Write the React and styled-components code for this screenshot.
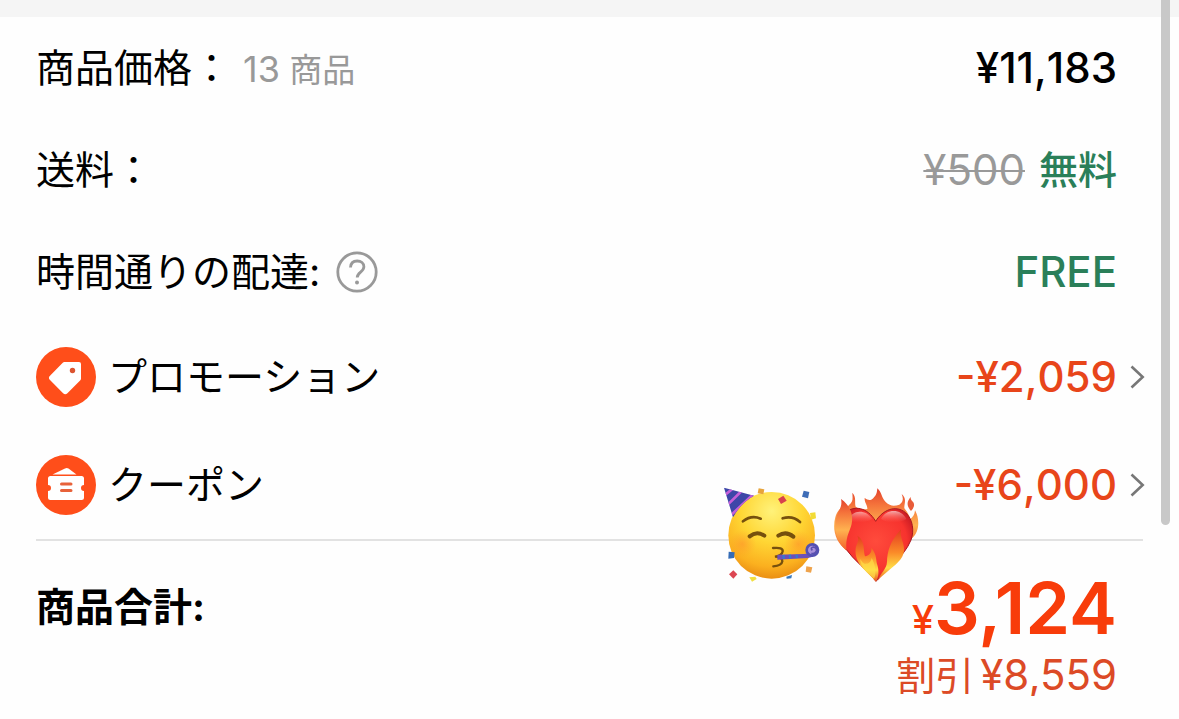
import React from 'react';
import styled, { createGlobalStyle } from 'styled-components';

const GlobalStyle = createGlobalStyle`
  * {
    box-sizing: border-box;
  }

  body {
    margin: 0;
    background: #fefefe;
    color: #000;
    font-family: Inter, "Noto Sans CJK JP", sans-serif;
    overflow: hidden;
  }
`;

const Page = styled.main`
  position: relative;
`;

const TopGap = styled.div`
  height: 17px;
  background: #f5f5f5;
`;

const ScrollThumb = styled.div`
  position: absolute;
  top: 0;
  right: 9px;
  width: 9px;
  height: 525px;
  border-radius: 0 0 5px 5px;
  background: #c8c8c8;
`;

const Row = styled.div`
  width: 100%;
  min-height: ${({ $tall }) => ($tall ? 108 : 102)}px;
  padding: 0 34px 0 36px;
  display: flex;
  align-items: center;
  justify-content: space-between;
  border: 0;
  background: none;
  color: inherit;
  font-family: inherit;
  text-align: left;
`;

const Label = styled.span`
  display: flex;
  align-items: center;
  gap: 12px;
  font-size: 39px;
  line-height: 56px;
`;

const Title = styled.span`
  font-weight: ${({ $bold }) => ($bold ? 700 : 400)};
`;

const Count = styled.span`
  padding-top: 2px;
  color: #999;
  font-size: 33px;
`;

const CountNumber = styled.span`
  font-size: 36px;
`;

const Value = styled.span`
  display: flex;
  align-items: center;
  gap: 14px;
  margin-left: auto;
  color: ${({ $color }) => $color || '#000'};
  font-size: 42px;
  font-weight: 500;
  font-kerning: none;
  line-height: 56px;
`;

const OldPrice = styled.s`
  color: #999;
  font-weight: 400;
  text-decoration-thickness: 2px;
`;

const Free = styled.span`
  font-size: 39px;
`;

const Trailing = styled.span`
  flex: none;
  width: 28px;
  display: flex;
  justify-content: flex-end;
`;

const HelpButton = styled.button`
  display: flex;
  padding: 0 0 0 4px;
  border: 0;
  background: none;
`;

const Divider = styled.div`
  position: relative;
  height: 2px;
  margin: 0 36px;
  background: #e2e2e2;
`;

const Stickers = styled.div`
  position: absolute;
  top: -64px;
  right: 208px;
  display: flex;
`;

const TotalRow = styled.div`
  padding: 32px 62px 0 36px;
  display: flex;
  justify-content: space-between;
  align-items: flex-start;
`;

const TotalAmounts = styled.div`
  text-align: right;
`;

const TotalLabel = styled(Label)`
  padding-top: 6px;
`;

const TotalPrice = styled.div`
  color: #f83c0a;
  font-size: 72px;
  font-weight: 600;
  line-height: 70px;
`;

const Currency = styled.span`
  font-size: 40px;
  font-weight: 500;
`;

const Saved = styled.div`
  color: #dc4a26;
  font-size: 42px;
  line-height: 40px;
`;

const SavedLabel = styled.span`
  padding-right: 6px;
  font-size: 39px;
`;

const HelpIcon = () => (
  <svg width="42" height="42" viewBox="0 0 42 42" fill="none" stroke="#999" strokeWidth="2.8">
    <circle cx="21" cy="21" r="19.2" />
    <path d="M14.500 16.500c.2-4.200 2.900-6.500 6.700-6.500 3.900 0 6.700 2.300 6.700 5.800 0 5.200-6.700 5.400-6.700 10.700" />
    <circle cx="21" cy="31.5" r="2" fill="#999" stroke="none" />
  </svg>
);

const TagIcon = () => (
  <svg width="60" height="60" viewBox="0 0 60 60">
    <circle cx="30" cy="30" r="30" fill="#ff4e1a" />
    <path
      d="M28.500 15H43a2 2 0 0 1 2 2v14.500a3 3 0 0 1-.9 2.100L31.400 46.200a3 3 0 0 1-4.300 0L14 33a3 3 0 0 1 0-4.300l12.500-12.800a3 3 0 0 1 2-.9z"
      fill="#fff"
    />
    <circle cx="36.5" cy="23.5" r="2.7" fill="#dc5430" />
  </svg>
);

const CouponIcon = () => (
  <svg width="60" height="60" viewBox="0 0 60 60">
    <circle cx="30" cy="30" r="30" fill="#ff4e1a" />
    <path d="M16.500 19.500 29 13.400a4 4 0 0 1 3.500.1l8 6z" fill="#fff" />
    <path
      d="M14.500 21h31a2.500 2.500 0 0 1 2.500 2.500V30a3 3 0 0 0 0 6v6.500a2.500 2.500 0 0 1-2.500 2.500h-31a2.500 2.500 0 0 1-2.500-2.500V36a3 3 0 0 0 0-6v-6.500a2.500 2.500 0 0 1 2.500-2.500z"
      fill="#fff"
    />
    <path d="M25.500 29h9.500M25.500 35.500h9.500" stroke="#e8623a" strokeWidth="3" strokeLinecap="round" />
  </svg>
);

const Chevron = () => (
  <svg width="15" height="24" viewBox="0 0 15 24" fill="none" stroke="#777" strokeWidth="2.6">
    <path d="m1.500 1.500 11.200 10.500L1.500 22.500" />
  </svg>
);

const PartyFace = () => (
  <svg width="115" height="120" viewBox="0 0 345 360">
    <defs>
      <radialGradient id="face" cx="0.5" cy="0.22" r="0.8">
        <stop offset="0" stopColor="#fff27a" />
        <stop offset="0.45" stopColor="#ffd634" />
        <stop offset="0.8" stopColor="#fbb01f" />
        <stop offset="1" stopColor="#e88a12" />
      </radialGradient>
      <radialGradient id="cheek">
        <stop offset="0" stopColor="#ff8a2c" stopOpacity="0.5" />
        <stop offset="1" stopColor="#ff9c28" stopOpacity="0" />
      </radialGradient>
      <clipPath id="hat">
        <path d="M42 38 132 62Q94 82 69 127Z" />
      </clipPath>
    </defs>
    <circle cx="185" cy="181" r="130" fill="url(#face)" />
    <circle cx="97" cy="207" r="42" fill="url(#cheek)" />
    <circle cx="265" cy="207" r="42" fill="url(#cheek)" />
    <g clipPath="url(#hat)">
      <path d="M35 30h105v105H35z" fill="#3d46a8" />
      <path d="M42 62 72 38M48 94 101 42M57 126 134 54" stroke="#c65fd8" strokeWidth="8" />
    </g>
    <g fill="none" stroke="#76500d" strokeLinecap="round">
      <path d="M99 139q25-20 53-8M218 130q30-9 52 11" strokeWidth="8" />
      <path d="M119 184q21-17 44-2M205 182q23-15 45 3" strokeWidth="12" />
      <path d="M189 219q31-3 29 10-2 12-23 16 23 1 22 14-2 13-27 15" strokeWidth="7" />
    </g>
    <path d="m202 239 79-2q24 0 34-12l7 8q-12 17-42 17l-78 4z" fill="#6c50b8" />
    <path d="m220 240 2 11m17-12 2 11m18-11 2 10" stroke="#3478d2" strokeWidth="7" />
    <circle cx="307" cy="225" r="17" fill="#a991db" stroke="#5350b2" strokeWidth="8" />
    <path d="M307 226q-7-8 3-10 11 2 9 12-4 10-15 7" fill="none" stroke="#5950af" strokeWidth="5" />
    <path d="m146 40 17 3-3 15-17-3z" fill="#e7a43b" />
    <path d="m204 72 16-10 10 15-17 10z" fill="#d8414d" />
    <path d="m281 47 17 4-4 19-18-5z" fill="#3e6db7" />
    <path d="m300 114 16-2 2 18-15 4z" fill="#f2db35" />
    <path d="m56 230 18 2-2 17-17 2z" fill="#356cb6" />
    <path d="m70 286 12 12-12 13-13-13z" fill="#dc4652" />
    <path d="m118 307 18-2 4 7-14 8z" fill="#f2df3f" />
    <path d="m229 305 17-5-2 10-14 1z" fill="#3878bc" />
    <path d="m289 274 18 3-4 16-16-3z" fill="#eea34c" />
  </svg>
);

const FireHeart = () => (
  <svg width="110" height="120" viewBox="0 0 330 360">
    <defs>
      <linearGradient id="flame" x1="0" y1="0" x2="0" y2="1">
        <stop offset="0" stopColor="#e2412c" />
        <stop offset="0.25" stopColor="#f4703a" />
        <stop offset="0.6" stopColor="#ffb250" />
        <stop offset="1" stopColor="#f2602a" />
      </linearGradient>
      <linearGradient id="frontFlame" x1="0" y1="0" x2="0" y2="1">
        <stop offset="0" stopColor="#e23a20" />
        <stop offset="0.45" stopColor="#fb8a28" />
        <stop offset="0.75" stopColor="#ffdc46" />
        <stop offset="1" stopColor="#e8501e" />
      </linearGradient>
      <radialGradient id="heart" cx="0.5" cy="0.45" r="0.6">
        <stop offset="0" stopColor="#ff4b3c" />
        <stop offset="0.7" stopColor="#f7332e" />
        <stop offset="1" stopColor="#bd1520" />
      </radialGradient>
      <linearGradient id="shine" x1="0" y1="0" x2="0" y2="1">
        <stop offset="0" stopColor="#fff" stopOpacity="0.6" />
        <stop offset="1" stopColor="#ff7b70" stopOpacity="0" />
      </linearGradient>
    </defs>
    <path
      d="M62 224C32 202 21 163 31 127c6-22 20-29 17-29 12 2 19 0 24-8 13-9 11-20 10-37 13 15 6 27 10 42 12 9 28 9 35 7 1-13-9-18-8-33 9 7 18 8 24 2 11-9 13-18 14-31 13 10 12 29 25 41 14 14 27 12 41 8 13-8 12-20 7-32 17 14 7 30 8 43 9 12 15 19 17 33 9-7 14-14 15-27 15 26 13 64-7 82z"
      fill="url(#flame)"
    />
    <path d="M257 66c-12 14-13 26 1 42 12-13 11-23 4-29-4-4-5-8-5-13z" fill="#e85c39" />
    <path
      d="M152 139C128 97 86 88 57 116c-26 31-17 76 5 105 25 36 63 62 91 98 35-42 84-72 105-124 10-27 6-62-16-82-29-24-68-10-90 26z"
      fill="url(#heart)"
      stroke="#a81820"
      strokeWidth="3"
    />
    <path d="M70 136c10-34 54-34 72-4-18 12-54 14-72 4zm98-4c16-32 60-32 76 0-18 14-58 14-76 0z" fill="url(#shine)" />
    <path
      d="M65 227C36 204 23 160 35 124c7-20 18-31 13-52 25 17 38 45 32 74-5 23-21 43-15 81z"
      fill="url(#flame)"
    />
    <path
      d="M153 320c-24-30-66-52-61-99 2-17 12-22 5-39 25 15 17 45 23 62 14-3 21-13 19-26 18 22 13 38 18 52 5 15 5 36-4 50z"
      fill="url(#frontFlame)"
    />
    <path
      d="M158 317c10-26 27-34 28-57 1-29 8-60 42-97-4 29 10 37 9 63-2 35-39 50-79 91z"
      fill="url(#frontFlame)"
    />
    <path d="M105 251c2 25 21 41 42 61 9-20 3-46-7-63-3 13-9 17-18 17-8 0-12-8-17-15z" fill="#ffe148" opacity="0.65" />
  </svg>
);

const DISCOUNTS = [
  { title: 'プロモーション', amount: '-¥2,059', Icon: TagIcon },
  { title: 'クーポン', amount: '-¥6,000', Icon: CouponIcon },
];

const App = () => (
  <Page>
    <GlobalStyle />
    <TopGap />
    <Row>
      <Label>
        <Title>商品価格：</Title>
        <Count>
          <CountNumber>13</CountNumber> 商品
        </Count>
      </Label>
      <Value>¥11,183</Value>
      <Trailing />
    </Row>
    <Row>
      <Label>
        <Title>送料：</Title>
      </Label>
      <Value $color="#2a7f59">
        <OldPrice>¥500</OldPrice>
        <Free>無料</Free>
      </Value>
      <Trailing />
    </Row>
    <Row>
      <Label>
        <Title>時間通りの配達:</Title>
        <HelpButton type="button" aria-label="ヘルプ">
          <HelpIcon />
        </HelpButton>
      </Label>
      <Value $color="#2a7f59">FREE</Value>
      <Trailing />
    </Row>
    {DISCOUNTS.map(({ title, amount, Icon }) => (
      <Row as="button" type="button" $tall key={title}>
        <Label>
          <Icon />
          <Title>{title}</Title>
        </Label>
        <Value $color="#e8451a">{amount}</Value>
        <Trailing>
          <Chevron />
        </Trailing>
      </Row>
    ))}
    <Divider>
      <Stickers>
        <PartyFace />
        <FireHeart />
      </Stickers>
    </Divider>
    <TotalRow>
      <TotalLabel>
        <Title $bold>商品合計:</Title>
      </TotalLabel>
      <TotalAmounts>
        <TotalPrice>
          <Currency>¥</Currency>3,124
        </TotalPrice>
        <Saved>
          <SavedLabel>割引</SavedLabel>¥8,559
        </Saved>
      </TotalAmounts>
    </TotalRow>
    <ScrollThumb />
  </Page>
);

export default App;
